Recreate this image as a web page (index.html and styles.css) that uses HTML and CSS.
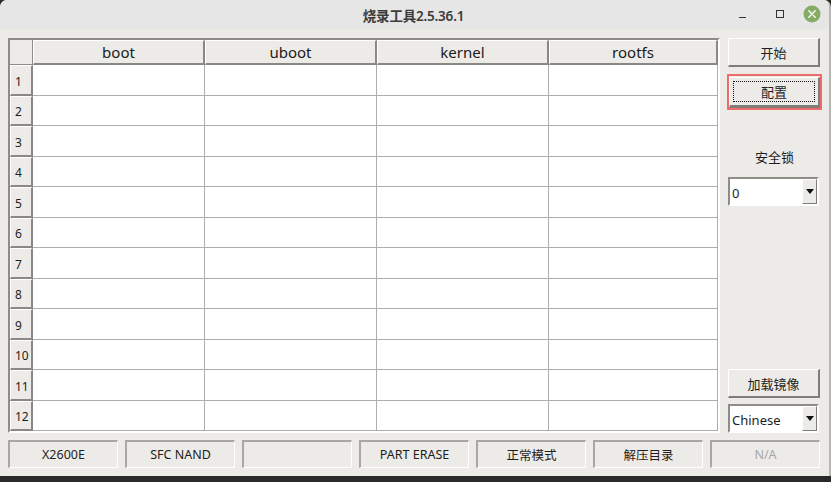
FILE: index.html
```html
<!DOCTYPE html>
<html>
<head>
<meta charset="utf-8">
<link rel="stylesheet" href="styles.css">
</head>
<body>
<div class="window">
  <div class="titlebar">
    <div class="title">烧录工具2.5.36.1</div>
    <div class="controls">
      <span class="ctl-min"></span>
      <span class="ctl-max"></span>
      <span class="ctl-close">
        <svg width="18" height="18" viewBox="0 0 18 18"><circle cx="9" cy="9" r="8.5" fill="#86ab62"/><path d="M5.8 5.8 L12.2 12.2 M12.2 5.8 L5.8 12.2" stroke="#fff" stroke-width="1.3" stroke-linecap="round"/></svg>
      </span>
    </div>
  </div>
  <div class="content">
    <div class="main">
      <div class="table">
        <div class="corner"></div>
        <div class="hcell">boot</div>
        <div class="hcell">uboot</div>
        <div class="hcell">kernel</div>
        <div class="hcell">rootfs</div>
        <div class="rh">1</div><div class="c"></div><div class="c"></div><div class="c"></div><div class="c"></div>
        <div class="rh">2</div><div class="c"></div><div class="c"></div><div class="c"></div><div class="c"></div>
        <div class="rh">3</div><div class="c"></div><div class="c"></div><div class="c"></div><div class="c"></div>
        <div class="rh">4</div><div class="c"></div><div class="c"></div><div class="c"></div><div class="c"></div>
        <div class="rh">5</div><div class="c"></div><div class="c"></div><div class="c"></div><div class="c"></div>
        <div class="rh">6</div><div class="c"></div><div class="c"></div><div class="c"></div><div class="c"></div>
        <div class="rh">7</div><div class="c"></div><div class="c"></div><div class="c"></div><div class="c"></div>
        <div class="rh">8</div><div class="c"></div><div class="c"></div><div class="c"></div><div class="c"></div>
        <div class="rh">9</div><div class="c"></div><div class="c"></div><div class="c"></div><div class="c"></div>
        <div class="rh">10</div><div class="c"></div><div class="c"></div><div class="c"></div><div class="c"></div>
        <div class="rh">11</div><div class="c"></div><div class="c"></div><div class="c"></div><div class="c"></div>
        <div class="rh">12</div><div class="c"></div><div class="c"></div><div class="c"></div><div class="c"></div>
      </div>
      <div class="side">
        <div class="btn">开始</div>
        <div class="focus-wrap"><div class="btn focused"><span class="dots">配置</span></div></div>
        <div class="label">安全锁</div>
        <div class="combo"><span class="cval">0</span><span class="carrow"><svg width="8" height="5" viewBox="0 0 8 5"><path d="M0 0 H8 L4 5 Z" fill="#111"/></svg></span></div>
        <div class="spacer"></div>
        <div class="btn">加载镜像</div>
        <div class="combo combo2"><span class="cval">Chinese</span><span class="carrow"><svg width="8" height="5" viewBox="0 0 8 5"><path d="M0 0 H8 L4 5 Z" fill="#111"/></svg></span></div>
      </div>
    </div>
    <div class="bottom">
      <div class="panel">X2600E</div>
      <div class="panel">SFC NAND</div>
      <div class="panel"></div>
      <div class="panel">PART ERASE</div>
      <div class="panel">正常模式</div>
      <div class="panel">解压目录</div>
      <div class="panel disabled">N/A</div>
    </div>
  </div>
</div>
<div class="taskbar"></div>
</body>
</html>
```

FILE: styles.css
```css
* { box-sizing: border-box; }
html, body { margin: 0; padding: 0; }
body {
  width: 831px;
  height: 482px;
  overflow: hidden;
  background: #2a2a2a;
  font-family: "Noto Sans", "Noto Sans CJK SC", sans-serif;
  color: #1e1e1e;
}
.window {
  width: 831px;
  height: 476px;
  background: #edebe7;
  border-radius: 7px 7px 0 0;
  border-right: 2px solid #b9b7b3;
  display: flex;
  flex-direction: column;
  overflow: hidden;
}
.titlebar {
  height: 29px;
  background: #e6e6e6;
  display: flex;
  align-items: center;
  justify-content: center;
  position: relative;
  flex-shrink: 0;
}
.title {
  font-size: 13.5px;
  font-weight: 600;
  color: #3b3b3b;
  margin-left: -2px;
  margin-top: 1px;
  letter-spacing: -0.2px;
}
.controls {
  position: absolute;
  right: 8px;
  top: 4px;
  display: flex;
  align-items: center;
  height: 19px;
}
.ctl-min {
  width: 7px;
  height: 1px;
  background: #333;
  margin-top: 8px;
  margin-right: 30px;
}
.ctl-max {
  width: 8px;
  height: 8px;
  border: 1px solid #333;
  margin-right: 19px;
}
.ctl-close { width: 18px; height: 18px; display: block; }
.ctl-close svg { display: block; }

.content {
  flex: 1;
  display: flex;
  flex-direction: column;
  padding: 9px 0 0 8px;
}
.main {
  display: flex;
  gap: 8px;
  height: 395px;
  flex-shrink: 0;
}
.table {
  flex: 0 0 712px;
  width: 712px;
  height: 395px;
  border-style: solid;
  border-width: 2px;
  border-color: #8e8c89 #ffffff #ffffff #8e8c89;
  background: #ffffff;
  display: grid;
  grid-template-columns: 23px 172px 172px 172px 1fr;
  grid-template-rows: 25px repeat(12, 1fr);
}
.corner {
  background: #edebe7;
  border-right: 1px solid #8e8c89;
  border-bottom: 1px solid #8e8c89;
}
.hcell {
  background: #edebe7;
  border-top: 1px solid #fff;
  border-left: 1px solid #fff;
  border-right: 2px solid #8a8885;
  border-bottom: 2px solid #8a8885;
  display: flex;
  align-items: center;
  justify-content: center;
  font-size: 15px;
  color: #1a1a1a;
  padding-bottom: 1px;
}
.rh {
  background: #edebe7;
  border-top: 1px solid #fff;
  border-left: 1px solid #fff;
  border-right: 2px solid #8a8885;
  border-bottom: 2px solid #8a8885;
  font-size: 12px;
  display: flex;
  align-items: center;
  padding-left: 4px;
  padding-top: 3px;
}
.c {
  border-right: 1px solid #adadad;
  border-bottom: 1px solid #adadad;
}

.side {
  flex: 0 0 93px;
  width: 93px;
  display: flex;
  flex-direction: column;
}
.btn {
  height: 29px;
  background: #edebe7;
  border-style: solid;
  border-width: 1px 2px 2px 1px;
  border-color: #ffffff #7f7d7a #7f7d7a #ffffff;
  display: flex;
  align-items: center;
  justify-content: center;
  font-size: 13px;
  color: #1e1e1e;
  width: 92px;
}
.focus-wrap {
  margin-top: 7px;
  margin-left: -1px;
  width: 95px;
  height: 36px;
  border: 2px solid #ef6a6a;
  padding: 1px 0 0 0;
}
.btn.focused {
  height: 31px;
  width: 91px;
  padding: 3px;
  border-width: 1px 2px 3px 1px;
}
.dots {
  width: 100%;
  height: 100%;
  border: 1px dotted #111;
  display: flex;
  align-items: center;
  justify-content: center;
}
.label {
  margin-top: 38px;
  text-align: center;
  font-size: 13px;
  height: 18px;
  line-height: 18px;
}
.combo {
  margin-top: 11px;
  width: 91px;
  height: 29px;
  background: #fff;
  border-style: solid;
  border-width: 2px;
  border-color: #8e8c89 #ffffff #ffffff #8e8c89;
  display: flex;
  align-items: stretch;
}
.cval {
  flex: 1;
  font-size: 13px;
  display: flex;
  align-items: center;
  padding-left: 2px;
  padding-top: 2px;
}
.carrow {
  width: 15px;
  background: #edebe7;
  border-style: solid;
  border-width: 1px 1px 1px 1px;
  border-color: #ffffff #7f7d7a #7f7d7a #ffffff;
  display: flex;
  align-items: center;
  justify-content: center;
}
.carrow svg { display: block; }
.spacer { flex: 1; }
.combo2 { margin-top: 6px; }

.bottom {
  margin-top: 7px;
  display: flex;
  gap: 7px;
}
.panel {
  flex: 0 0 110px;
  width: 110px;
  height: 28px;
  border-style: solid;
  border-width: 2px 1px 1px 2px;
  border-color: #a9a7a3 #ffffff #ffffff #a9a7a3;
  display: flex;
  align-items: center;
  justify-content: center;
  font-size: 12.5px;
  color: #1e1e1e;
  padding-bottom: 1px;
}
.panel.disabled { color: #a8a6a2; }
.taskbar {
  height: 6px;
  background: #2a2a2a;
}
```
